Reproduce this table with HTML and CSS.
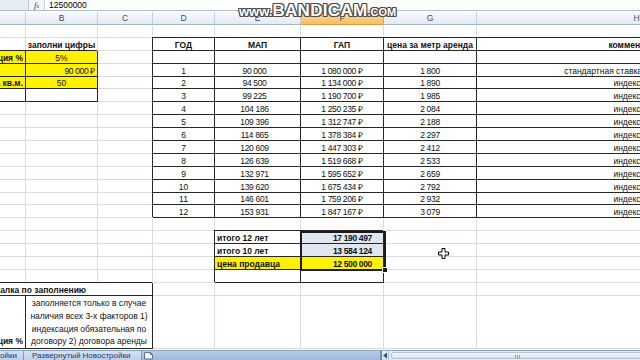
FILE: index.html
```html
<!DOCTYPE html>
<html lang="ru">
<head>
<meta charset="utf-8">
<title>Расчёт аренды</title>
<link rel="stylesheet" href="styles.css">
</head>
<body>
<div class="app">
  <div class="fbar">
    <div class="namebox"></div>
    <div class="fx">f<span class="sub">x</span></div>
    <div class="ftext">12500000</div>
  </div>
  <div class="sheet">
    <div class="row hdr">
      <div class="h"></div><div class="h">B</div><div class="h">C</div><div class="h">D</div><div class="h">E</div><div class="h hsel">F</div><div class="h">G</div><div class="h">H</div>
    </div>
    <div class="row">
      <div class="c"></div><div class="c"></div><div class="c"></div><div class="c"></div><div class="c"></div><div class="c"></div><div class="c"></div><div class="c"></div>
    </div>
    <div class="row">
      <div class="c"></div><div class="c m bd">заполни цифры</div><div class="c"></div><div class="c b m bd">ГОД</div><div class="c b m bd">МАП</div><div class="c b m bd">ГАП</div><div class="c b m bd">цена за метр аренда</div><div class="c b m bd">комментарий</div>
    </div>
    <div class="row">
      <div class="c b y r bd">индексация %</div><div class="c b y m">5%</div><div class="c"></div><div class="c b"></div><div class="c b"></div><div class="c b"></div><div class="c b"></div><div class="c b"></div>
    </div>
    <div class="row">
      <div class="c b y"></div><div class="c b y r n">90 000 ₽</div><div class="c"></div><div class="c b m">1</div><div class="c b m e n">90 000</div><div class="c b m n">1 080 000 ₽</div><div class="c b m n">1 800</div><div class="c b m">стандартная ставка арендной платы</div>
    </div>
    <div class="row">
      <div class="c b y r bd">аренда за кв.м.</div><div class="c b y m">50</div><div class="c"></div><div class="c b m">2</div><div class="c b m e n">94 500</div><div class="c b m n">1 134 000 ₽</div><div class="c b m n">1 890</div><div class="c b m">индексация</div>
    </div>
    <div class="row">
      <div class="c b"></div><div class="c b"></div><div class="c"></div><div class="c b m">3</div><div class="c b m e n">99 225</div><div class="c b m n">1 190 700 ₽</div><div class="c b m n">1 985</div><div class="c b m">индексация</div>
    </div>
    <div class="row">
      <div class="c"></div><div class="c"></div><div class="c"></div><div class="c b m">4</div><div class="c b m e n">104 186</div><div class="c b m n">1 250 235 ₽</div><div class="c b m n">2 084</div><div class="c b m">индексация</div>
    </div>
    <div class="row">
      <div class="c"></div><div class="c"></div><div class="c"></div><div class="c b m">5</div><div class="c b m e n">109 396</div><div class="c b m n">1 312 747 ₽</div><div class="c b m n">2 188</div><div class="c b m">индексация</div>
    </div>
    <div class="row">
      <div class="c"></div><div class="c"></div><div class="c"></div><div class="c b m">6</div><div class="c b m e n">114 865</div><div class="c b m n">1 378 384 ₽</div><div class="c b m n">2 297</div><div class="c b m">индексация</div>
    </div>
    <div class="row">
      <div class="c"></div><div class="c"></div><div class="c"></div><div class="c b m">7</div><div class="c b m e n">120 609</div><div class="c b m n">1 447 303 ₽</div><div class="c b m n">2 412</div><div class="c b m">индексация</div>
    </div>
    <div class="row">
      <div class="c"></div><div class="c"></div><div class="c"></div><div class="c b m">8</div><div class="c b m e n">126 639</div><div class="c b m n">1 519 668 ₽</div><div class="c b m n">2 533</div><div class="c b m">индексация</div>
    </div>
    <div class="row">
      <div class="c"></div><div class="c"></div><div class="c"></div><div class="c b m">9</div><div class="c b m e n">132 971</div><div class="c b m n">1 595 652 ₽</div><div class="c b m n">2 659</div><div class="c b m">индексация</div>
    </div>
    <div class="row">
      <div class="c"></div><div class="c"></div><div class="c"></div><div class="c b m">10</div><div class="c b m e n">139 620</div><div class="c b m n">1 675 434 ₽</div><div class="c b m n">2 792</div><div class="c b m">индексация</div>
    </div>
    <div class="row">
      <div class="c"></div><div class="c"></div><div class="c"></div><div class="c b m">11</div><div class="c b m e n">146 601</div><div class="c b m n">1 759 206 ₽</div><div class="c b m n">2 932</div><div class="c b m">индексация</div>
    </div>
    <div class="row">
      <div class="c"></div><div class="c"></div><div class="c"></div><div class="c b m">12</div><div class="c b m e n">153 931</div><div class="c b m n">1 847 167 ₽</div><div class="c b m n">3 079</div><div class="c b m">индексация</div>
    </div>
    <div class="row">
      <div class="c"></div><div class="c"></div><div class="c"></div><div class="c"></div><div class="c"></div><div class="c"></div><div class="c"></div><div class="c"></div>
    </div>
    <div class="row">
      <div class="c"></div><div class="c"></div><div class="c"></div><div class="c"></div><div class="c b bd">итого 12 лет</div><div class="c b t r bd n tot">17 190 497</div><div class="c"></div><div class="c"></div>
    </div>
    <div class="row">
      <div class="c"></div><div class="c"></div><div class="c"></div><div class="c"></div><div class="c b bd">итого 10 лет</div><div class="c b t r bd n tot">13 584 124</div><div class="c"></div><div class="c"></div>
    </div>
    <div class="row">
      <div class="c"></div><div class="c"></div><div class="c"></div><div class="c"></div><div class="c b y bd">цена продавца</div><div class="c b y r bd n tot">12 500 000</div><div class="c"></div><div class="c"></div>
    </div>
    <div class="row">
      <div class="c"></div><div class="c"></div><div class="c"></div><div class="c"></div><div class="c b"></div><div class="c b"></div><div class="c"></div><div class="c"></div>
    </div>
    <div class="row">
      <div class="c b bd span3 hint">Шпаргалка по заполнению</div><div class="c"></div><div class="c"></div><div class="c"></div><div class="c"></div><div class="c"></div>
    </div>
    <div class="row tall">
      <div class="c b r bd lowtxt">индексация %</div><div class="c b span2 wrap">заполняется только в случае<br>наличия всех 3-х факторов 1)<br>индексация обязательная по<br>договору 2) договора аренды</div><div class="c"></div><div class="c"></div><div class="c"></div><div class="c"></div><div class="c"></div>
    </div>
    <div class="selbox"><span class="handle"></span></div>
  </div>
  <div class="tabs">
    <div class="tab cut">ойки</div>
    <div class="tab">Развернутый Новостройки</div>
    <div class="tabnew">
      <svg width="11" height="9" viewBox="0 0 11 9"><path d="M1.5 1.5h6l2 2v4.5h-8z" fill="#f4f7fb" stroke="#5a7398" stroke-width="1"/><path d="M7.5 1.5v2h2" fill="none" stroke="#5a7398" stroke-width="1"/></svg>
    </div>
    <div class="tabfill"></div>
    <div class="hscroll">
      <div class="split"></div>
      <div class="arrow"><svg width="6" height="7" viewBox="0 0 6 7"><path d="M5 0.5v6l-4-3z" fill="#2d4f86"/></svg></div>
      <div class="track"><div class="thumb"><span class="grip"></span></div></div>
    </div>
  </div>
  <div class="wm"><span class="w">www.</span><span class="big">BANDICAM</span><span class="com">.com</span></div>
  <svg class="cursor" width="11" height="11" viewBox="0 0 11 11"><path d="M4 0.5h3v3.5h3.5v3h-3.5v3.5h-3v-3.5h-3.5v-3h3.5z" fill="#fff" stroke="#000" stroke-width="1"/></svg>
</div>
</body>
</html>
```

FILE: styles.css
```css
:root {
  --grid: #d9dde3;
  --bd: #262626;
  --yel: #fff200;
  --tint: #e0e6ef;
}
* { box-sizing: border-box; }
html, body { margin: 0; padding: 0; }
body {
  width: 640px;
  height: 360px;
  overflow: hidden;
  background: #fff;
  font-family: "Liberation Sans", Arial, sans-serif;
  font-size: 8.5px;
  color: #111;
}
.app {
  position: relative;
  width: 640px;
  height: 360px;
  display: flex;
  flex-direction: column;
  overflow: hidden;
}

/* formula bar */
.fbar {
  flex: none;
  height: 11px;
  display: flex;
  border-bottom: 1px solid #aebdd0;
  margin-bottom: 1px;
}
.namebox {
  width: 29px;
  background: #e7edf5;
  border-right: 1px solid #b9c6d6;
}
.fx {
  width: 16px;
  display: flex;
  align-items: center;
  justify-content: center;
  font-family: "Liberation Serif", serif;
  font-style: italic;
  font-size: 9px;
  line-height: 9px;
  color: #2d3b4f;
  background: #f2f5f9;
  border-right: 1px solid #c8d2df;
}
.fx .sub { font-size: 6px; margin-top: 3px; }
.ftext {
  flex: 1;
  padding-left: 4px;
  display: flex;
  align-items: center;
  line-height: 9px;
  color: #000;
}

/* sheet grid */
.sheet {
  flex: 1;
  min-height: 0;
  margin-left: -40px;
  overflow: hidden;
  position: relative;
}
.row {
  display: grid;
  grid-template-columns: 66px 72px 55px 62px 86px 83px 93px 320px;
  height: 12.9px;
}
.row.hdr { height: 13px; }
.row.tall { height: 53px; }

.h {
  display: flex;
  align-items: center;
  justify-content: center;
  background: linear-gradient(#f8fafd, #e3e9f1);
  border-right: 1px solid #c4cfdc;
  border-bottom: 1px solid #a3b6cc;
  color: #3f4a58;
  font-size: 8.5px;
  line-height: 9px;
}
.h.hsel {
  background: linear-gradient(#fadb9e, #f3c064);
  border-right-color: #e8a948;
  border-bottom-color: #e39a33;
}

.c {
  min-width: 0;
  display: flex;
  align-items: flex-end;
  justify-content: flex-start;
  padding: 0 2px;
  line-height: 9px;
  white-space: nowrap;
  overflow: hidden;
  border-right: 1px solid var(--grid);
  border-bottom: 1px solid var(--grid);
}
.c.b {
  border-right-color: var(--bd);
  border-bottom-color: var(--bd);
  box-shadow: -1px -1px 0 0 var(--bd);
}
.c.y { background: var(--yel); }
.c.t { background: var(--tint); }
.c.m { justify-content: center; }
.c.r { justify-content: flex-end; }
.c.e { padding-right: 8px; }
.c.n { letter-spacing: -0.35px; }
.c.bd { font-weight: bold; }
.c.tot { padding-right: 11px; }

.span3 { grid-column: span 3; }
.span2 { grid-column: span 2; }
.hint { padding-left: 13px; }
.lowtxt { padding-bottom: 2px; }
.wrap {
  white-space: normal;
  align-items: flex-start;
  justify-content: center;
  text-align: center;
  line-height: 12.7px;
  padding-top: 1.5px;
}

.selbox {
  position: absolute;
  left: 340px;
  top: 218.5px;
  width: 86px;
  height: 40.5px;
  border: 2px solid #1b1b1b;
  pointer-events: none;
}
.handle {
  position: absolute;
  right: -4px;
  bottom: -4px;
  width: 6px;
  height: 6px;
  background: #1b1b1b;
  border: 1px solid #fff;
}

/* sheet tabs + scroll */
.tabs {
  flex: none;
  height: 10px;
  display: flex;
  background: linear-gradient(#b9cdea, #9fb8de);
  border-top: 1px solid #8aa5cc;
  overflow: hidden;
}
.tab {
  display: flex;
  align-items: center;
  padding: 0 11px 0 8px;
  color: #1e3a68;
  font-size: 8px;
  line-height: 8px;
  white-space: nowrap;
  background: linear-gradient(#d6e2f3, #bccfea);
  border-right: 1px solid #7f9cc6;
  transform-origin: bottom;
}
.tab.cut {
  width: 25px;
  padding: 0 6px 0 0;
  justify-content: flex-end;
}
.tabnew {
  width: 14px;
  display: flex;
  align-items: center;
  justify-content: center;
}
.tabfill { width: 250px; }
.hscroll {
  flex: none;
  width: 260px;
  display: flex;
  background: #e6ebf3;
}
.split {
  width: 3px;
  background: #f1f4f9;
  border-left: 1px solid #6f8cb6;
  border-right: 1px solid #6f8cb6;
}
.arrow {
  width: 12px;
  display: flex;
  align-items: center;
  justify-content: center;
  background: linear-gradient(#eef3fa, #cfdbeb);
  border-right: 1px solid #a9bbd4;
}
.track {
  flex: 1;
  padding: 1px 0 1px 2px;
}
.thumb {
  position: relative;
  width: 252px;
  height: 100%;
  background: linear-gradient(#f3f6fb, #d9e3f0);
  border: 1px solid #b3c3da;
  border-radius: 2px;
}
.grip {
  position: absolute;
  left: 123px;
  top: 2px;
  width: 5px;
  height: 4px;
  border-left: 1px solid #8ea3c2;
  border-right: 1px solid #8ea3c2;
}
.grip::after {
  content: "";
  position: absolute;
  left: 1px;
  top: 0;
  width: 1px;
  height: 4px;
  background: #8ea3c2;
}

/* overlays */
.wm {
  position: absolute;
  left: 239px;
  top: 2px;
  font-family: "Liberation Sans", Arial, sans-serif;
  font-weight: bold;
  color: #fff;
  line-height: 17px;
  white-space: nowrap;
  text-shadow: 1px 0 #4a4a4a, -1px 0 #4a4a4a, 0 1px #4a4a4a, 0 -1px #4a4a4a,
    1px 1px #4a4a4a, -1px -1px #4a4a4a, 1px -1px #4a4a4a, -1px 1px #4a4a4a;
}
.wm .w { font-size: 13px; }
.wm .big { font-size: 17px; letter-spacing: 0.3px; }
.wm .com { font-size: 11px; text-transform: uppercase; }
.cursor {
  position: absolute;
  left: 438px;
  top: 248px;
}
```
